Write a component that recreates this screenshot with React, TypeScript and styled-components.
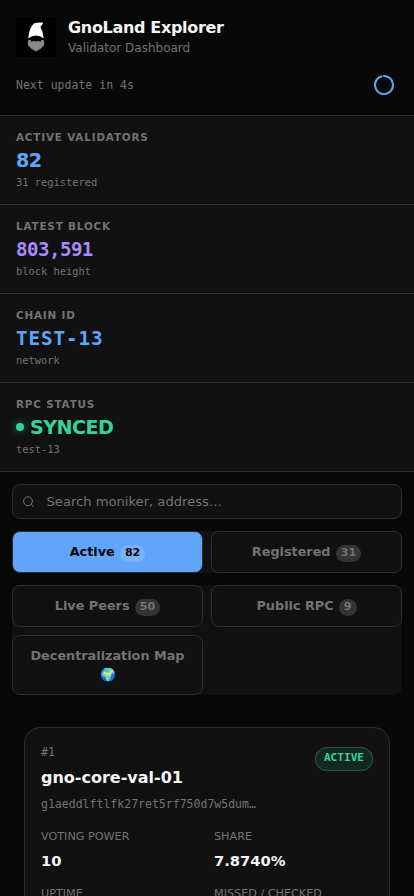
import React from "react";
import styled, { createGlobalStyle } from "styled-components";

const SANS = `"DejaVu Sans", sans-serif`;
const MONO = `"DejaVu Sans Mono", monospace`;

const GlobalStyle = createGlobalStyle`
  *, *::before, *::after { box-sizing: border-box; }
  html, body { margin: 0; padding: 0; background: #080808; }
  body { height: 896px; overflow: hidden; font-family: ${SANS}; color: #f5f5f5; }
`;

const Page = styled.div`
  width: 100%;
  height: 896px;
  overflow: hidden;
  background: #080808;
`;

const Header = styled.header`
  height: 116px;
  padding: 16px 16px 0;
  border-bottom: 1px solid #2e2e2e;
`;

const Brand = styled.div`
  display: flex;
  align-items: center;
  gap: 12px;
  height: 42px;
`;

const Logo = styled.svg`
  display: block;
  width: 40px;
  height: 40px;
`;

const Title = styled.h1`
  margin: 0;
  font-size: 16px;
  line-height: 20px;
  font-weight: 700;
  letter-spacing: -0.32px;
  padding-top: 1px;
`;

const Subtitle = styled.p`
  margin: 0;
  font-size: 12px;
  line-height: 20px;
  color: #737373;
`;

const UpdateRow = styled.div`
  display: flex;
  align-items: center;
  justify-content: space-between;
  height: 54px;
  padding-right: 4px;
`;

const Countdown = styled.span`
  font: 11.52px/14px ${MONO};
  color: #737373;
`;

const Spinner = styled.svg`
  display: block;
  width: 20px;
  height: 20px;
`;

const Stat = styled.section`
  height: 89px;
  padding: 15px 16px 0;
  background: #111;
  border-bottom: 1px solid #2e2e2e;
`;

const StatLabel = styled.div`
  font-size: 10.4px;
  line-height: 13px;
  font-weight: 700;
  letter-spacing: 0.832px;
  color: #737373;
`;

const StatValue = styled.div<{ $color: string; $mono?: boolean; $spacing?: string }>`
  display: flex;
  align-items: center;
  gap: 6px;
  margin-top: 4px;
  height: 24px;
  font-family: ${(p) => (p.$mono ? MONO : SANS)};
  font-size: 19.2px;
  line-height: 24px;
  font-weight: 700;
  letter-spacing: ${(p) => p.$spacing ?? "-0.576px"};
  color: ${(p) => p.$color};
`;

const ValueText = styled.span`
  padding-top: 2px;
`;

const Dot = styled.i`
  width: 8px;
  height: 8px;
  border-radius: 50%;
  background: #34d399;
  box-shadow: 0 0 8px rgba(52, 211, 153, 0.6);
`;

const StatNote = styled.div`
  margin-top: 4px;
  font: 10.4px/13px ${MONO};
  color: #737373;
`;

const Controls = styled.div`
  display: flex;
  flex-direction: column;
  gap: 12px;
  padding: 12px 12px 0;
`;

const Search = styled.label`
  display: flex;
  align-items: center;
  gap: 11.5px;
  height: 35px;
  padding: 0 10px;
  border: 1px solid #2e2e2e;
  border-radius: 8px;
  background: #111;
`;

const SearchIcon = styled.svg`
  display: block;
  flex: none;
  width: 12px;
  height: 12px;
`;

const SearchInput = styled.input`
  flex: 1;
  min-width: 0;
  padding: 0;
  border: 0;
  outline: 0;
  background: transparent;
  color: #f5f5f5;
  font: 13.12px/16px ${SANS};
  &::placeholder { color: #737373; opacity: 1; }
`;

const TabGroup = styled.div`
  display: grid;
  grid-template-columns: 1fr 1fr;
  gap: 8px;
  border-radius: 8px;
  background: #111;
`;

const Tab = styled.button<{ $active?: boolean }>`
  min-height: 42px;
  padding: 10px 16px;
  border: 1px solid #2e2e2e;
  border-radius: 8px;
  background: ${(p) => (p.$active ? "#60a5fa" : "#111")};
  color: ${(p) => (p.$active ? "#080808" : "#737373")};
  font: 700 12.8px/19px ${SANS};
  text-align: center;
`;

const Count = styled.span`
  display: inline-block;
  margin-left: 5.2px;
  padding: 0 5px 2px;
  border-radius: 9px;
  background: rgba(255, 255, 255, 0.15);
  font-size: 11.1px;
  line-height: 15px;
  vertical-align: baseline;
`;

const Card = styled.article`
  height: 240px;
  margin: 32px 24px 0;
  padding: 16px;
  border: 1px solid #2e2e2e;
  border-radius: 16px;
  background: #111;
`;

const CardHead = styled.div`
  display: flex;
  justify-content: space-between;
  align-items: flex-start;
`;

const Rank = styled.div`
  font: 11.52px/16px ${MONO};
  color: #737373;
`;

const Moniker = styled.h2`
  margin: 8px 0 0;
  font-size: 16px;
  line-height: 20px;
  font-weight: 700;
`;

const Address = styled.div`
  margin-top: 8px;
  font: 11.52px/16px ${MONO};
  color: #737373;
`;

const Status = styled.span`
  height: 24px;
  margin-top: 3px;
  padding: 0 8px;
  border: 1px solid rgba(52, 211, 153, 0.3);
  border-radius: 12px;
  background: rgba(52, 211, 153, 0.12);
  color: #34d399;
  font: 700 11.1px/20px ${MONO};
`;

const Metrics = styled.dl`
  display: grid;
  grid-template-columns: 1fr 1fr;
  gap: 16px 14px;
  margin: 17px 0 0;
`;

const MetricName = styled.dt`
  font-size: 11.2px;
  line-height: 16px;
  color: #737373;
`;

const MetricValue = styled.dd`
  margin: 7px 0 0;
  font-size: 14.72px;
  line-height: 18px;
  font-weight: 700;
`;

const stats = [
  { label: "ACTIVE VALIDATORS", value: "82", note: "31 registered", color: "#60a5fa" },
  { label: "LATEST BLOCK", value: "803,591", note: "block height", color: "#a78bfa", mono: true },
  { label: "CHAIN ID", value: "TEST-13", note: "network", color: "#60a5fa", mono: true, spacing: "0.96px" },
  { label: "RPC STATUS", value: "SYNCED", note: "test-13", color: "#34d399", dot: true },
];

const metrics = [
  ["VOTING POWER", "10"],
  ["SHARE", "7.8740%"],
  ["UPTIME", "100%"],
  ["MISSED / CHECKED", "0 / 100"],
];

export default function App() {
  return (
    <Page>
      <GlobalStyle />
      <Header>
        <Brand>
          <Logo viewBox="0 0 40 40">
            <rect width="40" height="40" fill="#000" />
            <path d="M18 6.6 Q20 5.4 26.5 5.6 L27 6.4 L24.4 10 Q27 14.5 27.8 21.4 Q24 18.6 20 18.6 Q16 18.6 12.2 21.4 Q13 11 18 6.6Z" fill="#fff" />
            <path d="M11.8 23.8 L14.2 22.4 L15.4 24.8 Q17.6 23.4 20 24.6 Q22.4 23.4 24.6 24.8 L25.8 22.4 L28.2 23.8 L28 28.4 Q25 32 20 34.4 Q15 32 12 28.4Z" fill="#888" />
          </Logo>
          <div>
            <Title>GnoLand Explorer</Title>
            <Subtitle>Validator Dashboard</Subtitle>
          </div>
        </Brand>
        <UpdateRow>
          <Countdown>Next update in 4s</Countdown>
          <Spinner viewBox="0 0 20 20" fill="none">
            <circle cx="10" cy="10" r="9" stroke="#2e2e2e" strokeWidth="2" />
            <circle cx="10" cy="10" r="9" stroke="#60a5fa" strokeWidth="2" strokeDasharray="55 1.6" transform="rotate(-95 10 10)" />
          </Spinner>
        </UpdateRow>
      </Header>
      {stats.map((s) => (
        <Stat key={s.label}>
          <StatLabel>{s.label}</StatLabel>
          <StatValue $color={s.color} $mono={s.mono} $spacing={s.spacing}>
            {s.dot && <Dot />}
            <ValueText>{s.value}</ValueText>
          </StatValue>
          <StatNote>{s.note}</StatNote>
        </Stat>
      ))}
      <Controls>
        <Search>
          <SearchIcon viewBox="0 0 12 12" fill="none" stroke="#737373" strokeLinecap="round">
            <circle cx="5" cy="5.2" r="4.4" />
            <path d="M8.2 8.5 L10.3 10.6" />
          </SearchIcon>
          <SearchInput placeholder="Search moniker, address…" />
        </Search>
        <TabGroup>
          <Tab $active>Active<Count>82</Count></Tab>
          <Tab>Registered<Count>31</Count></Tab>
        </TabGroup>
        <TabGroup>
          <Tab>Live Peers<Count>50</Count></Tab>
          <Tab>Public RPC<Count>9</Count></Tab>
          <Tab>Decentralization Map 🌍</Tab>
        </TabGroup>
      </Controls>
      <Card>
        <CardHead>
          <div>
            <Rank>#1</Rank>
            <Moniker>gno-core-val-01</Moniker>
            <Address>g1aeddlftlfk27ret5rf750d7w5dum…</Address>
          </div>
          <Status>ACTIVE</Status>
        </CardHead>
        <Metrics>
          {metrics.map(([name, value]) => (
            <div key={name}>
              <MetricName>{name}</MetricName>
              <MetricValue>{value}</MetricValue>
            </div>
          ))}
        </Metrics>
      </Card>
    </Page>
  );
}
